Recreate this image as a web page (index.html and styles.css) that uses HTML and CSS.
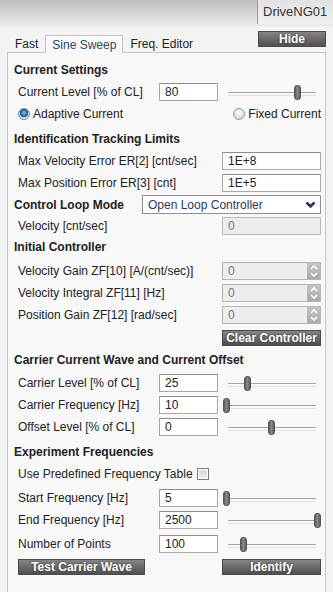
FILE: index.html
```html
<!DOCTYPE html>
<html lang="en">
<head>
  <meta charset="UTF-8">
  <meta name="viewport" content="width=device-width, initial-scale=1.0">
  <title>DriveNG01 - Sine Sweep</title>
  <link rel="stylesheet" href="styles.css">
</head>
<body>
  <div class="topbar">
    <div class="device">DriveNG01</div>
  </div>

  <div class="tabbar">
    <div class="tabs">
      <span class="tab">Fast</span>
      <span class="tab active">Sine Sweep</span>
      <span class="tab">Freq. Editor</span>
    </div>
    <button class="btn hide">Hide</button>
  </div>

  <div class="panel">
    <!-- Current settings -->
    <div class="heading">Current Settings</div>
    <div class="row">
      <span class="label">Current Level [% of CL]</span>
      <div class="field short">80</div>
      <div class="slider"><div class="thumb" style="left: 71px"></div></div>
    </div>
    <div class="row">
      <span class="radio checked"></span>
      <span class="radio-text">Adaptive Current</span>
      <span class="radio right"></span>
      <span class="radio-text">Fixed Current</span>
    </div>

    <!-- Tracking limits -->
    <div class="heading gap">Identification Tracking Limits</div>
    <div class="row">
      <span class="label wide">Max Velocity Error ER[2] [cnt/sec]</span>
      <div class="field long">1E+8</div>
    </div>
    <div class="row">
      <span class="label wide">Max Position Error ER[3] [cnt]</span>
      <div class="field long">1E+5</div>
    </div>

    <div class="mode-row">
      <span class="mode-label">Control Loop Mode</span>
      <div class="select">
        <span>Open Loop Controller</span>
        <svg width="11" height="8" viewBox="0 0 11 8"><path d="M1.5 1.5 L5.5 5.5 L9.5 1.5" fill="none" stroke="#1f3a5c" stroke-width="2.6"/></svg>
      </div>
    </div>
    <div class="row">
      <span class="label wide">Velocity [cnt/sec]</span>
      <div class="field long disabled">0</div>
    </div>

    <!-- Initial controller -->
    <div class="heading">Initial Controller</div>
    <div class="row push">
      <span class="label wide">Velocity Gain ZF[10] [A/(cnt/sec)]</span>
      <div class="field long spin">
        <span class="spin-value">0</span>
        <span class="spin-btns">
          <svg width="8" height="5" viewBox="0 0 8 5"><path d="M1 4 L4 1 L7 4" fill="none" stroke="#fff" stroke-width="1.6"/></svg>
          <svg width="8" height="5" viewBox="0 0 8 5"><path d="M1 1 L4 4 L7 1" fill="none" stroke="#fff" stroke-width="1.6"/></svg>
        </span>
      </div>
    </div>
    <div class="row">
      <span class="label wide">Velocity Integral ZF[11] [Hz]</span>
      <div class="field long spin">
        <span class="spin-value">0</span>
        <span class="spin-btns">
          <svg width="8" height="5" viewBox="0 0 8 5"><path d="M1 4 L4 1 L7 4" fill="none" stroke="#fff" stroke-width="1.6"/></svg>
          <svg width="8" height="5" viewBox="0 0 8 5"><path d="M1 1 L4 4 L7 1" fill="none" stroke="#fff" stroke-width="1.6"/></svg>
        </span>
      </div>
    </div>
    <div class="row">
      <span class="label wide">Position Gain ZF[12] [rad/sec]</span>
      <div class="field long spin">
        <span class="spin-value">0</span>
        <span class="spin-btns">
          <svg width="8" height="5" viewBox="0 0 8 5"><path d="M1 4 L4 1 L7 4" fill="none" stroke="#fff" stroke-width="1.6"/></svg>
          <svg width="8" height="5" viewBox="0 0 8 5"><path d="M1 1 L4 4 L7 1" fill="none" stroke="#fff" stroke-width="1.6"/></svg>
        </span>
      </div>
    </div>
    <div class="btn-row end">
      <button class="btn long-btn">Clear Controller</button>
    </div>

    <!-- Carrier -->
    <div class="heading">Carrier Current Wave and Current Offset</div>
    <div class="row nudge">
      <span class="label">Carrier Level [% of CL]</span>
      <div class="field short">25</div>
      <div class="slider"><div class="thumb" style="left: 21px"></div></div>
    </div>
    <div class="row">
      <span class="label">Carrier Frequency [Hz]</span>
      <div class="field short">10</div>
      <div class="slider"><div class="thumb" style="left: 0px"></div></div>
    </div>
    <div class="row">
      <span class="label">Offset Level [% of CL]</span>
      <div class="field short">0</div>
      <div class="slider"><div class="thumb" style="left: 45px"></div></div>
    </div>

    <!-- Experiment -->
    <div class="heading gap">Experiment Frequencies</div>
    <div class="row">
      <span class="check-text">Use Predefined Frequency Table</span>
      <span class="checkbox"></span>
    </div>
    <div class="row push">
      <span class="label">Start Frequency [Hz]</span>
      <div class="field short">5</div>
      <div class="slider"><div class="thumb" style="left: 0px"></div></div>
    </div>
    <div class="row">
      <span class="label">End Frequency [Hz]</span>
      <div class="field short">2500</div>
      <div class="slider"><div class="thumb" style="left: 91px"></div></div>
    </div>
    <div class="row push">
      <span class="label">Number of Points</span>
      <div class="field short">100</div>
      <div class="slider"><div class="thumb" style="left: 17px"></div></div>
    </div>
    <div class="btn-row split">
      <button class="btn test-btn">Test Carrier Wave</button>
      <button class="btn long-btn">Identify</button>
    </div>
  </div>
</body>
</html>
```

FILE: styles.css
```css
* {
  margin: 0;
  padding: 0;
  box-sizing: border-box;
}

body {
  font-family: 'Liberation Sans', Arial, sans-serif;
  font-size: 12px;
  color: #222;
  background: #f3f3f3;
  width: 333px;
  height: 592px;
  overflow: hidden;
}

/* top strip */
.topbar {
  height: 27px;
  background: linear-gradient(#bdbdbd, #eeeeee);
  display: flex;
  justify-content: flex-end;
}

.device {
  width: 76px;
  height: 24px;
  margin-top: 0;
  padding: 4px 0 0 5px;
  font-size: 13px;
  color: #333;
  background: linear-gradient(#e2e2e2, #f1f1f1);
  border-left: 1px solid #9a9a9a;
}

/* tabs */
.tabbar {
  height: 25px;
  padding: 0 7px 0 8px;
  display: flex;
  justify-content: space-between;
  align-items: flex-end;
}

.tabs {
  display: flex;
}

.tab {
  height: 18px;
  line-height: 18px;
  padding: 0 7px;
  font-size: 12px;
  color: #222;
  margin-bottom: -1px;
}

.tab.active {
  padding: 0 6px;
  background: #f8f8f8;
  border: 1px solid #c6c6c6;
  border-bottom: none;
  color: #2a4a66;
  position: relative;
  z-index: 1;
}

.btn {
  font-family: 'Liberation Sans', Arial, sans-serif;
  font-size: 12px;
  font-weight: bold;
  color: #fff;
  height: 16px;
  line-height: 14px;
  border: 1px solid #4a4a4a;
  background: linear-gradient(#858585, #4f4f4f);
  text-shadow: 0 0 2px #333;
  cursor: pointer;
}

.hide {
  width: 68px;
  align-self: flex-start;
  margin-top: 4px;
}

/* main panel */
.panel {
  margin-left: 7px;
  width: 319px;
  height: 545px;
  padding: 7px 4px 0 6px;
  background: #f8f8f8;
  border: 1px solid #c6c6c6;
}

.heading {
  height: 21px;
  line-height: 21px;
  font-weight: bold;
}

.heading.gap {
  margin-top: 4px;
}

.row {
  height: 22px;
  padding-left: 4px;
  display: flex;
  align-items: center;
}

.row.push {
  margin-top: 2px;
}

.row.nudge {
  margin-top: 1px;
}

.label {
  width: 141px;
  flex-shrink: 0;
}

.label.wide {
  width: 204px;
}

.field {
  height: 18px;
  line-height: 16px;
  padding-left: 5px;
  background: #fff;
  border: 1px solid #a8a8a8;
  border-top-color: #8c8c8c;
  font-size: 12px;
}

.field.short {
  width: 59px;
}

.field.long {
  width: 99px;
}

.field.disabled {
  background: #ececec;
  border-color: #b9b9b9;
  color: #777;
}

.field.spin {
  display: flex;
  padding-left: 0;
  background: #ededed;
  border-color: #b4b4b4;
  color: #777;
}

.spin-value {
  flex: 1;
  padding-left: 5px;
}

.spin-btns {
  width: 13px;
  background: linear-gradient(#c6c6c6, #a9a9a9);
  display: flex;
  flex-direction: column;
  align-items: center;
  justify-content: space-around;
  padding: 1px 0;
}

/* slider */
.slider {
  width: 98px;
  height: 18px;
  margin-left: 5px;
  position: relative;
}

.slider::before {
  content: '';
  position: absolute;
  left: 5px;
  right: 5px;
  top: 9px;
  height: 2px;
  border-top: 1px solid #a5a5a5;
  border-bottom: 1px solid #e2e2e2;
}

.thumb {
  position: absolute;
  top: 2px;
  width: 7px;
  height: 15px;
  border-radius: 3px;
  background: linear-gradient(90deg, #5a5a5a, #8a8a8a 50%, #5a5a5a);
  border: 1px solid #555;
}

/* radios + checkbox */
.radio {
  width: 12px;
  height: 12px;
  border-radius: 50%;
  border: 1px solid #9a9a9a;
  background: radial-gradient(circle at 50% 35%, #fafafa, #cfcfcf);
  flex-shrink: 0;
}

.radio.checked {
  border-color: #6d8aa5;
  background: radial-gradient(circle at 50% 40%, #7fc0ef 0, #2a73b5 3px, #1b4f86 4px, #e8eef4 4.6px, #c9d6e2 6px);
}

.radio.right {
  margin-left: auto;
}

.radio-text {
  margin-left: 3px;
}

.check-text {
  width: 179px;
}

.checkbox {
  width: 12px;
  height: 12px;
  border: 1px solid #7a7a7a;
  background: linear-gradient(#d4d4d4, #f2f2f2);
  box-shadow: inset 0 0 0 1px #fff;
}

/* control loop mode */
.mode-row {
  height: 21px;
  display: flex;
  align-items: center;
}

.mode-label {
  width: 128px;
  font-weight: bold;
}

.select {
  width: 179px;
  height: 19px;
  padding: 0 4px 0 5px;
  background: #fff;
  border: 1px solid #8f8f8f;
  display: flex;
  align-items: center;
  justify-content: space-between;
  color: #1f3a5c;
}

/* button rows */
.btn-row {
  height: 24px;
  padding-left: 4px;
  display: flex;
  align-items: center;
}

.btn-row.end {
  justify-content: flex-end;
}

.btn-row.split {
  justify-content: space-between;
}

.long-btn {
  width: 99px;
}

.test-btn {
  width: 127px;
}
```
